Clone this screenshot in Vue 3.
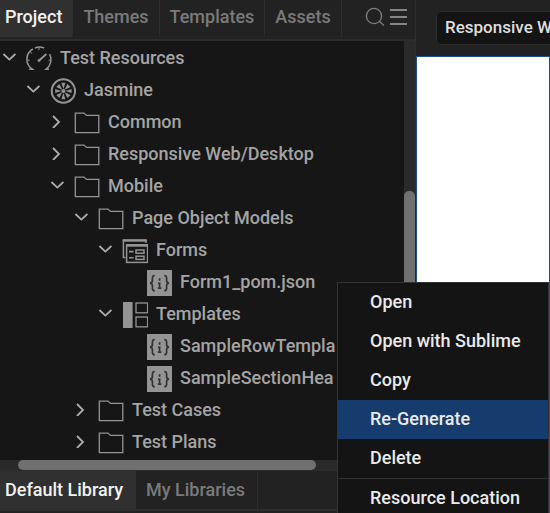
<script setup>
import { ref } from 'vue'

const panelTabs = ['Project', 'Themes', 'Templates', 'Assets']
const activePanel = ref('Project')
const libraryTabs = ['Default Library', 'My Libraries']
const activeLibrary = ref('Default Library')

const rows = [
  { label: 'Test Resources', level: 0, icon: 'gauge', open: true },
  { label: 'Jasmine', level: 1, icon: 'jasmine', open: true },
  { label: 'Common', level: 2, icon: 'folder', open: false },
  { label: 'Responsive Web/Desktop', level: 2, icon: 'folder', open: false },
  { label: 'Mobile', level: 2, icon: 'folder', open: true },
  { label: 'Page Object Models', level: 3, icon: 'folder', open: true },
  { label: 'Forms', level: 4, icon: 'forms', open: true },
  { label: 'Form1_pom.json', level: 5, icon: 'json' },
  { label: 'Templates', level: 4, icon: 'templates', open: true },
  { label: 'SampleRowTempla', level: 5, icon: 'json' },
  { label: 'SampleSectionHea', level: 5, icon: 'json' },
  { label: 'Test Cases', level: 3, icon: 'folder', open: false },
  { label: 'Test Plans', level: 3, icon: 'folder', open: false },
]

const menuGroups = [
  ['Open', 'Open with Sublime', 'Copy', 'Re-Generate', 'Delete'],
  ['Resource Location'],
]
const highlighted = ref('Re-Generate')
</script>

<template>
  <div class="workspace">
    <aside class="panel">
      <nav class="tabs top-tabs">
        <button
          v-for="tab in panelTabs"
          :key="tab"
          type="button"
          class="tab"
          :class="{ active: tab === activePanel }"
          @click="activePanel = tab"
        >{{ tab }}</button>
        <span class="tools">
          <button type="button" class="tool" aria-label="Search">
            <svg width="20" height="20" viewBox="0 0 20 20" fill="none" stroke="#7c7c7c" stroke-width="1.4">
              <circle cx="9" cy="9" r="7.6" />
              <path d="M14.2 14.2L19 18.6" />
            </svg>
          </button>
          <button type="button" class="tool" aria-label="Menu">
            <svg width="17" height="20" viewBox="0 0 17 20" fill="#858585">
              <path d="M0 2h17v2H0zM0 9h17v2H0zM0 16h17v2H0z" />
            </svg>
          </button>
        </span>
      </nav>

      <div class="tree-area">
        <ul class="tree">
          <li v-for="row in rows" :key="row.label + row.level" class="row" :class="'level-' + row.level">
            <span class="arrow">
              <svg v-if="row.open === true" width="14" height="14" viewBox="0 0 14 14" fill="none" stroke="#acacac" stroke-width="1.8">
                <path d="M1.4 4L7.4 9.6L13.4 4" />
              </svg>
              <svg v-else-if="row.open === false" width="14" height="14" viewBox="0 0 14 14" fill="none" stroke="#acacac" stroke-width="1.8">
                <path d="M3 2L9 8L3 14" />
              </svg>
            </span>

            <svg class="icon" width="26" height="26" viewBox="0 0 26 26" fill="none" stroke="#949494">
              <g v-if="row.icon === 'folder'" stroke-width="1.3">
                <path d="M1.3 3.1H10L12.5 5.4H24.8V22.6H1.3Z" />
              </g>
              <g v-else-if="row.icon === 'gauge'" stroke-width="1.5">
                <path d="M3.2 23.2H6.4C2.6 20.6 .9 17.3 .9 13.4C.9 9 3.2 5.1 6.8 3" />
                <path d="M9 2C12 .6 15.4 .8 18.2 2.2M23.6 8.2C26.2 13.6 24.8 19.6 20.2 23.2H23" />
                <path d="M13 1.2V4M4.2 6L5.8 7.4M1.4 14.2H3.6M22.6 14.2H24.8" stroke-width="1" />
                <path d="M13 14.4L20.4 8" stroke-width="2" />
                <circle cx="13" cy="14.6" r="1.4" fill="#949494" stroke="none" />
              </g>
              <g v-else-if="row.icon === 'jasmine'">
                <circle cx="13.4" cy="13" r="11.7" stroke-width="2" />
                <g fill="#949494" stroke="none">
                  <path d="M13.4 11L11.4 4.8H15.4ZM13.4 15L15.4 21.2H11.4ZM11.4 13L5.2 15V11ZM15.4 13L21.6 11V15Z" />
                  <path d="M12.2 11.8L6.3 9L9.4 5.9ZM14.6 11.8L17.4 5.9L20.5 9ZM14.6 14.2L20.5 17L17.4 20.1ZM12.2 14.2L9.4 20.1L6.3 17Z" />
                  <circle cx="13.4" cy="13" r="2" />
                </g>
              </g>
              <g v-else-if="row.icon === 'forms'" stroke-width="1.5">
                <path d="M3.4 19.4H1.4V2.4H24V5" />
                <path d="M.7 2.4H24.7" stroke-width="2.4" />
                <rect x="4.6" y="6.8" width="21" height="17.6" />
                <path d="M4 7.4H26" stroke-width="2.6" />
                <path d="M7 13.6H11.6M7 19.8H11.6" stroke-width="1.6" />
                <rect x="14" y="12" width="8" height="3.2" />
                <rect x="14" y="18.2" width="8" height="3.2" />
              </g>
              <g v-else-if="row.icon === 'templates'" stroke-width="1.3">
                <rect x="1" y="0" width="9.6" height="26" fill="#949494" stroke="none" />
                <rect x="14" y="1" width="11.6" height="9.8" />
                <rect x="14" y="15" width="11.6" height="9.8" />
              </g>
              <g v-else stroke="#333333" stroke-width="1.7">
                <rect x="1" y="0" width="25" height="26" fill="#949494" stroke="none" />
                <path d="M8.8 5.5C6.8 5.5 6.4 6.3 6.4 8V10.4C6.4 12 5.8 12.9 4 13.1C5.8 13.3 6.4 14.2 6.4 15.8V18.2C6.4 19.9 6.8 20.7 8.8 20.7" />
                <path d="M18.2 5.5C20.2 5.5 20.6 6.3 20.6 8V10.4C20.6 12 21.2 12.9 23 13.1C21.2 13.3 20.6 14.2 20.6 15.8V18.2C20.6 19.9 20.2 20.7 18.2 20.7" />
                <path d="M13.6 8.2V10.8M12 13.4H13.6V18.4M11.8 18.2H15.4" />
              </g>
            </svg>

            <span class="label">{{ row.label }}</span>
          </li>
        </ul>
        <div class="v-track"><div class="v-thumb"></div></div>
      </div>
      <div class="h-track"><div class="h-thumb"></div></div>

      <nav class="tabs library-tabs">
        <button
          v-for="tab in libraryTabs"
          :key="tab"
          type="button"
          class="tab"
          :class="{ active: tab === activeLibrary }"
          @click="activeLibrary = tab"
        >{{ tab }}</button>
      </nav>
    </aside>

    <main class="editor">
      <div class="toolbar">
        <button type="button" class="channel">Responsive We</button>
      </div>
      <div class="canvas"></div>
    </main>

    <div class="menu" role="menu">
      <div v-for="(group, index) in menuGroups" :key="index" class="menu-group">
        <button
          v-for="item in group"
          :key="item"
          type="button"
          role="menuitem"
          class="menu-item"
          :class="{ highlighted: item === highlighted }"
          @mouseenter="highlighted = item"
        >{{ item }}</button>
      </div>
    </div>
  </div>
</template>

<style>
body {
  background: #222222;
}
</style>

<style scoped>
.workspace {
  position: relative;
  display: flex;
  height: 100vh;
  overflow: hidden;
  background: #222222;
  color: #a4a4a4;
  font-family: Roboto, "Liberation Sans", sans-serif;
  font-size: 18px;
  font-weight: 500;
}

button {
  border: 0;
  background: none;
  color: inherit;
  font: inherit;
  white-space: nowrap;
}

.panel {
  display: flex;
  flex: 0 0 415px;
  flex-direction: column;
  min-width: 0;
}

.tabs {
  display: flex;
  flex: none;
  color: #7a7a7a;
}

.top-tabs {
  height: 37px;
  padding-bottom: 2px;
  border-bottom: 2px solid #2d2d2d;
}

.library-tabs {
  height: 38px;
  margin-bottom: 2px;
  border-bottom: 2px solid #2d2d2d;
}

.tab {
  padding: 0 10px;
  border-right: 1px solid #2f2f2f;
}

.library-tabs .tab {
  padding: 0 12px 2px 10px;
}

.tabs .tab:first-child {
  padding-left: 5px;
}

.tab.active {
  background: #303030;
  color: #f2f2f2;
}

.top-tabs .tab {
  padding-bottom: 4px;
}

.tools {
  display: flex;
  align-items: center;
  gap: 5px;
  margin-left: auto;
  padding: 0 8px 4px 0;
}

.tool {
  display: flex;
  padding: 0;
}

.tree-area {
  display: flex;
  flex: 1;
  min-height: 0;
  background: #161616;
}

.tree {
  flex: 1;
  min-width: 0;
  margin: 0;
  padding: 0;
  overflow: hidden;
  list-style: none;
}

.row {
  display: flex;
  align-items: center;
  height: 32px;
  padding-left: 2px;
  white-space: nowrap;
}

.level-1 { padding-left: 26px; }
.level-2 { padding-left: 50px; }
.level-3 { padding-left: 74px; }
.level-4 { padding-left: 98px; }
.level-5 { padding-left: 122px; }

.arrow {
  display: flex;
  flex: none;
  width: 24px;
}

.icon {
  flex: none;
  margin-top: 4px;
  margin-right: 8px;
}

.v-track {
  flex: none;
  width: 11px;
  background: #2a2a2a;
}

.v-thumb {
  height: 66%;
  margin-top: 150px;
  border-radius: 5px;
  background: #707070;
}

.h-track {
  flex: none;
  padding: 0 99px 0 18px;
  border-bottom: 1px solid #2d2d2d;
  background: #2a2a2a;
}

.h-thumb {
  height: 10px;
  border-radius: 5px;
  background: #707070;
}

.editor {
  display: flex;
  flex: 1;
  flex-direction: column;
  min-width: 0;
  overflow: hidden;
  border-left: 1px solid #2d2d2d;
}

.toolbar {
  flex: none;
  padding: 11px 20px;
}

.channel {
  height: 34px;
  padding: 0 8px 2px;
  border: 1px solid #2d2d2d;
  border-radius: 5px;
  background: #141414;
  color: #dedede;
  font-size: 17px;
}

.canvas {
  flex: 1;
  border: 1px solid #21508c;
  background: #ffffff;
}

.menu {
  position: absolute;
  top: 282px;
  left: 337px;
  width: 210px;
  border: 1px solid #333333;
  background: #141414;
  color: #eaeaea;
}

.menu-group + .menu-group {
  border-top: 1px solid #333333;
}

.menu-item {
  display: block;
  width: 100%;
  height: 39px;
  padding: 0 32px 2px;
  text-align: left;
}

.menu-item.highlighted {
  background: #163c6e;
}
</style>
